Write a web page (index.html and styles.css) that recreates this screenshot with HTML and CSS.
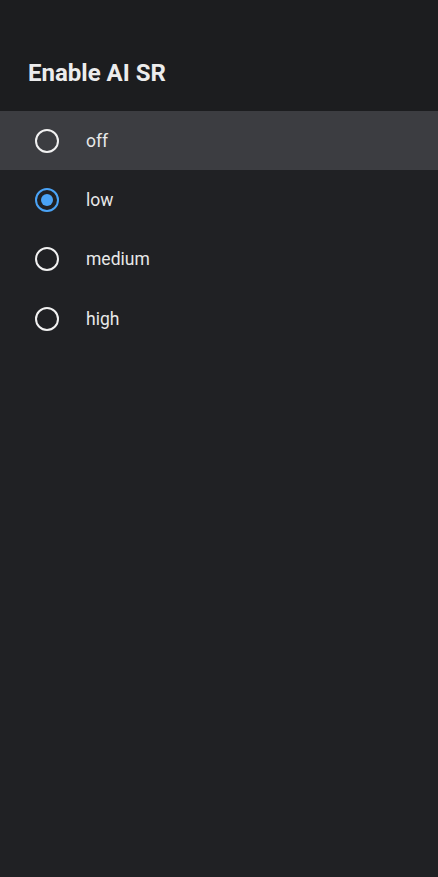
FILE: index.html
```html
<!DOCTYPE html>
<html>
<head>
<meta charset="utf-8">
<link rel="stylesheet" href="styles.css">
</head>
<body>
<div class="screen">
  <header class="header"><h1 class="title">Enable AI SR</h1></header>
  <ul class="list">
    <li class="row focused"><span class="radio"></span><span class="label">off</span></li>
    <li class="row"><span class="radio checked"></span><span class="label">low</span></li>
    <li class="row"><span class="radio"></span><span class="label">medium</span></li>
    <li class="row"><span class="radio"></span><span class="label">high</span></li>
  </ul>
</div>
</body>
</html>
```
FILE: styles.css
```css
html, body { margin: 0; padding: 0; }
body { background: #202124; font-family: Roboto, "Liberation Sans", sans-serif; }
.screen { width: 438px; height: 877px; background: #202124; }
.header { height: 111px; background: #1c1d1f; box-sizing: border-box; padding: 57px 0 0 28px; }
.title { margin: 0; font-size: 24px; font-weight: 700; color: #ececec; line-height: 32px; }
.list { list-style: none; margin: 0; padding: 0; }
.row { height: 59.3px; display: flex; align-items: center; padding-left: 35px; box-sizing: border-box; }
.row.focused { background: #3c3d41; }
.radio { width: 24px; height: 24px; box-sizing: border-box; border: 2.3px solid #f1f1f1; border-radius: 50%; display: flex; align-items: center; justify-content: center; }
.radio.checked { border-color: #4aa3f6; }
.radio.checked::after { content: ""; width: 12px; height: 12px; border-radius: 50%; background: #4aa3f6; }
.label { margin-left: 27px; font-size: 17.5px; color: #e8e8e8; }
```
